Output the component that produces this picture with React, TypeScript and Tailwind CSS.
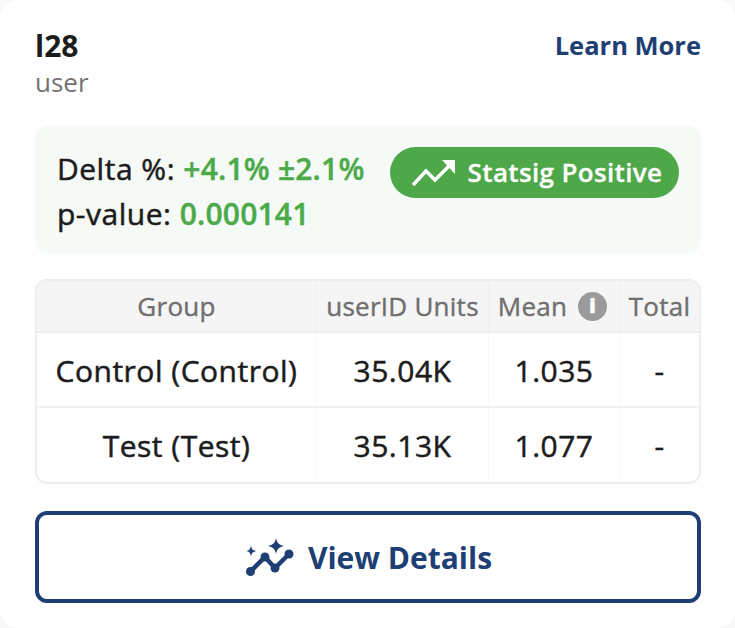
const rows = [
    { group: "Control (Control)", units: "35.04K", mean: "1.035", total: "-" },
    { group: "Test (Test)", units: "35.13K", mean: "1.077", total: "-" },
];

function TrendIcon() {
    return (
        <svg viewBox="0 0 44 26" className="w-[44px] h-[26px]" fill="none">
            <path d="M1 25 L14 11 L23 20 L38 5" stroke="#fff" strokeWidth="3.6" />
            <path d="M30 0 H43 V14 Z" fill="#fff" />
        </svg>
    );
}

function SparkIcon() {
    return (
        <svg viewBox="0 0 48 38" className="w-[48px] h-[38px]" fill="#1e3f74">
            <path d="M4 34 L19 19 L29 30 L43 16" fill="none" stroke="#1e3f74" strokeWidth="4.5" />
            <circle cx="4.500" cy="33.500" r="4.500" />
            <circle cx="19" cy="19" r="4.500" />
            <circle cx="29" cy="30" r="4.500" />
            <circle cx="43" cy="16" r="4.500" />
            <path d="M30 0 C31 5 33 7 38 8 C33 9 31 11 30 16 C29 11 27 9 22 8 C27 7 29 5 30 0 Z" />
            <path d="M5 7 C5.500 11 6.500 12.500 11 13 C6.500 13.500 5.500 15 5 19 C4.500 15 3.500 13.500 0 13 C3.500 12.500 4.500 11 5 7 Z" />
        </svg>
    );
}

export default function App() {
    return (
        <div className="w-[735px] h-[628px] bg-[#f8f8f8] font-['Open_Sans',sans-serif]">
            <div className="h-full rounded-[18px] bg-white pl-[35px] pr-[34px] pt-[24px] text-[#1c1c1c]">
                {/* Header */}
                <div className="flex items-start justify-between h-[102px]">
                    <div>
                        <div className="text-[30px] leading-[44px] font-bold">l28</div>
                        <div className="text-[26px] leading-[28px] text-[#737373]">user</div>
                    </div>
                    <a className="text-[25.5px] leading-[43px] font-bold text-[#1e3f74]">Learn More</a>
                </div>

                {/* Stats */}
                <div className="h-[127px] rounded-xl bg-[#f6faf6] pl-[22px] pr-[22px] pt-[21px] flex items-start justify-between">
                    <div className="-mt-px text-[30px] leading-[45px] tracking-[0.5px] [-webkit-text-stroke:0.5px] whitespace-nowrap">
                        <div>
                            Delta %:{" "}
                            <span className="font-semibold tracking-[0.2px] [-webkit-text-stroke:0.4px] text-[#4caa4a]">+4.1% ±2.1%</span>
                        </div>
                        <div>
                            p-value:{" "}
                            <span className="font-semibold tracking-[0.2px] [-webkit-text-stroke:0.4px] text-[#4caa4a]">0.000141</span>
                        </div>
                    </div>
                    <div className="h-[51px] w-[289px] shrink-0 rounded-full bg-[#4ea84a] pl-[5px] flex items-center justify-center gap-[12px] text-white text-[26px] font-semibold tracking-[0.35px] [-webkit-text-stroke:0.3px] whitespace-nowrap">
                        <TrendIcon />
                        <span>Statsig Positive</span>
                    </div>
                </div>

                {/* Table */}
                <div className="mt-[26px] h-[205px] rounded-xl border-2 border-[#eeeeee] overflow-hidden">
                    <div className="grid grid-cols-[279px_172px_131px_1fr] h-[52px] bg-[#f5f5f5] border-b-2 border-[#eeeeee] text-[26px] tracking-[0.25px] [-webkit-text-stroke:0.4px] text-[#6f6f6f]">
                        <div className="flex items-center justify-center">Group</div>
                        <div className="flex items-center justify-center border-l border-[#f0f0f0] whitespace-nowrap">userID Units</div>
                        <div className="flex items-center justify-center gap-[11px] pr-[3px] border-l border-[#f0f0f0]">
                            Mean
                            <span className="w-[29px] h-[29px] rounded-full bg-[#9b9b9b] flex items-center justify-center">
                                <span className="text-white text-[20px] font-extrabold leading-none">i</span>
                            </span>
                        </div>
                        <div className="flex items-center justify-center border-l border-[#f0f0f0]">Total</div>
                    </div>
                    {rows.map((row, idx) => (
                        <div
                            key={idx}
                            className={`grid grid-cols-[279px_172px_131px_1fr] text-[30px] tracking-[0.5px] [-webkit-text-stroke:0.5px] h-[75px] ${idx === 0 ? "pt-px border-b-2 border-[#f0f0f0]" : ""}`}
                        >
                            <div className="flex items-center justify-center">{row.group}</div>
                            <div className="flex items-center justify-center border-l border-[#f7f7f7]">{row.units}</div>
                            <div className="flex items-center justify-center border-l border-[#f7f7f7]">{row.mean}</div>
                            <div className="flex items-center justify-center border-l border-[#f7f7f7]">{row.total}</div>
                        </div>
                    ))}
                </div>

                {/* Action */}
                <button className="mt-[27px] h-[92px] w-full rounded-xl border-4 border-[#1e3f74] pl-[2px] flex items-center justify-center gap-[14px] text-[30px] font-bold text-[#1e3f74]">
                    <SparkIcon />
                    View Details
                </button>
            </div>
        </div>
    );
}
